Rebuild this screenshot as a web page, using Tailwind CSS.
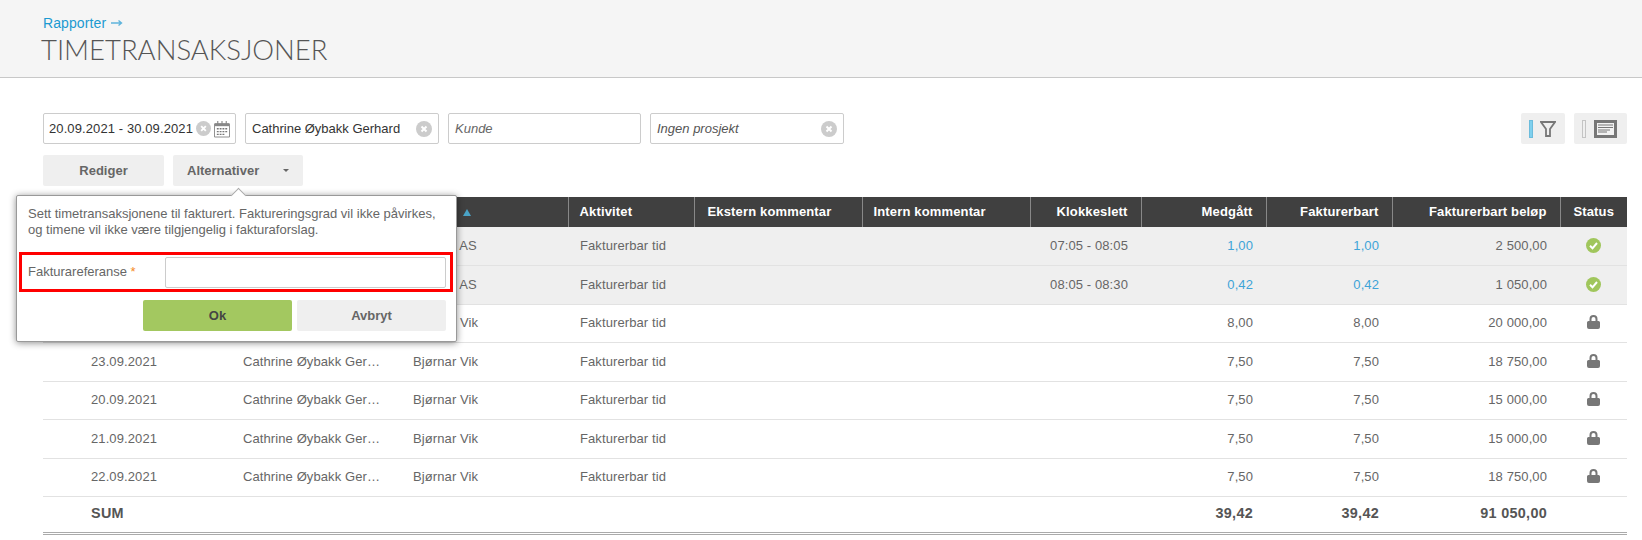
<!DOCTYPE html>
<html lang="nb">
  <head>
    <meta charset="UTF-8" />
    <title>Timetransaksjoner</title>
    <script src="https://cdn.jsdelivr.net/npm/@tailwindcss/browser@4"></script>
  </head>

  <body class="bg-white font-['Liberation_Sans',Arial,sans-serif] text-[#666] text-[13px] overflow-hidden">
    <!-- Page header -->
    <header class="h-[78px] bg-[#f5f5f5] border-b border-[#c8c8c8] px-[43px] pt-[15px]">
      <div class="flex items-center gap-[5px] text-[14px] leading-4 tracking-[0.1px] text-[#1b9ad1]">
        <span>Rapporter</span>
        <svg class="w-3 h-2" viewBox="0 0 12 8"><path d="M0 4h10M7.500 1.500 10.500 4 7.500 6.500" fill="none" stroke="#5fb4dc" stroke-width="1.400"/></svg>
      </div>
      <h1 class="font-['Lato',sans-serif] font-light text-[27.500px] leading-[34px] mt-[2px] text-[#555] -ml-[2px]">TIMETRANSAKSJONER</h1>
    </header>

    <main class="relative pl-[43px] pr-[15px] pt-[35px]">
      <!-- Filters -->
      <div class="flex justify-between">
        <div class="flex gap-[9px]">
          <div class="w-[193px] h-[31px] border border-[#ccc] rounded-[2px] flex items-center pl-[5px] text-[#333]">
            <span class="tracking-[0.1px]">20.09.2021 - 30.09.2021</span>
            <svg class="w-[15px] h-[15px] ml-[3px] shrink-0" viewBox="0 0 16 16"><circle cx="8" cy="8" r="8" fill="#ccc"/><path d="M5.500 5.500l5 5M10.500 5.500l-5 5" stroke="#fff" stroke-width="2"/></svg>
            <svg class="w-[16px] h-[18px] ml-[3px] shrink-0" viewBox="0 0 17 18"><path d="M.5 3.500h16v14H.5z" fill="#fff" stroke="#888"/><path d="M1 3h15v3H1z" fill="#888"/><path d="M4 .5v4M8.500.5v4M13 .5v4" stroke="#888" stroke-width="1.200"/><path d="M3 8h2v1.500H3zM6 8h2v1.500H6zM9 8h2v1.500H9zM12 8h2v1.500h-2zM3 11h2v1.500H3zM6 11h2v1.500H6zM9 11h2v1.500H9zM12 11h2v1.500h-2zM3 14h2v1.500H3zM6 14h2v1.500H6zM9 14h2v1.500H9z" fill="#777"/></svg>
          </div>
          <div class="w-[194px] h-[31px] border border-[#ccc] rounded-[2px] flex items-center justify-between pl-[6px] pr-[6px] text-[#333]">
            <span>Cathrine Øybakk Gerhard</span>
            <svg class="w-4 h-4 shrink-0" viewBox="0 0 16 16"><circle cx="8" cy="8" r="8" fill="#ccc"/><path d="M5.500 5.500l5 5M10.500 5.500l-5 5" stroke="#fff" stroke-width="2"/></svg>
          </div>
          <div class="w-[193px] h-[31px] border border-[#ccc] rounded-[2px] flex items-center pl-[6px] italic text-[#666]">Kunde</div>
          <div class="w-[194px] h-[31px] border border-[#ccc] rounded-[2px] flex items-center justify-between pl-[6px] pr-[6px] italic text-[#555]">
            <span>Ingen prosjekt</span>
            <svg class="w-4 h-4 shrink-0" viewBox="0 0 16 16"><circle cx="8" cy="8" r="8" fill="#ccc"/><path d="M5.500 5.500l5 5M10.500 5.500l-5 5" stroke="#fff" stroke-width="2"/></svg>
          </div>
        </div>
        <div class="flex gap-[9px]">
          <button class="w-[44px] h-[31px] bg-[#efefef] rounded-[2px] flex items-center pl-2 gap-[7px]">
            <span class="w-1 h-[18px] bg-[#7fd0ee] border border-[#6cbcdc]"></span>
            <svg class="w-4 h-4" viewBox="0 0 16 16"><path d="M1 1h14L10 8v7H6V8z" fill="none" stroke="#777" stroke-width="1.800"/></svg>
          </button>
          <button class="w-[53px] h-[31px] bg-[#efefef] rounded-[2px] flex items-center pl-2 gap-[8px]">
            <span class="w-1 h-[18px] bg-[#efefef] border border-[#c4c4c4]"></span>
            <svg class="w-[23px] h-[18px]" viewBox="0 0 23 18"><path d="M0 0h23v18H0z" fill="#777"/><path d="M3 3h17v12H3z" fill="#f2f2f2"/><path d="M4 5h15M4 7.500h15M4 10h12M4 12h9" stroke="#777" stroke-width="1"/></svg>
          </button>
        </div>
      </div>

      <!-- Actions -->
      <div class="flex gap-[9px] mt-[11px] font-bold text-[#666]">
        <button class="w-[121px] h-[31px] bg-[#efefef] rounded-[2px]">Rediger</button>
        <button class="w-[130px] h-[31px] bg-[#efefef] rounded-[2px] flex items-center pl-[14px]">
          <span>Alternativer</span>
          <span class="ml-[24px] border-x-[3.500px] border-t-[3.500px] border-x-transparent border-t-[#666]"></span>
        </button>
      </div>

      <!-- Table -->
      <table class="mt-[11px] w-[1584px] table-fixed border-collapse">
        <colgroup>
          <col class="w-[188px]" /><col class="w-[169px]" /><col class="w-[168px]" /><col class="w-[126px]" /><col class="w-[168px]" /><col class="w-[168px]" /><col class="w-[111px]" /><col class="w-[125px]" /><col class="w-[126px]" /><col class="w-[168px]" /><col class="w-[67px]" />
        </colgroup>
        <thead class="bg-[#404040] text-white font-bold tracking-[0.15px]">
          <tr class="h-[30px] [&_th]:border-l [&_th]:border-[#888] [&_th]:font-bold [&_th:first-child]:border-l-0">
            <th class="pl-[48px] text-left">Dato</th>
            <th class="pl-[12px] text-left">Ansatt</th>
            <th class="pl-[13px] text-left"><div class="flex items-center gap-2"><span>Kunde</span><span class="border-x-[4px] border-b-[7px] border-x-transparent border-b-[#4aa3c6]"></span></div></th>
            <th class="pl-[11px] text-left">Aktivitet</th>
            <th class="pl-[13px] text-left">Ekstern kommentar</th>
            <th class="pl-[11px] text-left">Intern kommentar</th>
            <th class="pr-[13px] text-right">Klokkeslett</th>
            <th class="pr-[13px] text-right">Medgått</th>
            <th class="pr-[13px] text-right">Fakturerbart</th>
            <th class="pr-[13px] text-right">Fakturerbart beløp</th>
            <th class="text-center">Status</th>
          </tr>
        </thead>
        <tbody class="tracking-[0.1px] [&_tr]:border-b [&_tr]:border-[#e2e2e2]">
          <tr class="h-[38px] bg-[#efefef]">
            <td class="pl-[48px]">23.09.2021</td>
            <td class="pl-[12px] pr-[19px]"><div class="truncate">Cathrine Øybakk Gerhard</div></td>
            <td class="pl-[13px]">Bjørnar AS</td>
            <td class="pl-[12px]">Fakturerbar tid</td><td></td><td></td>
            <td class="pr-[13px] text-right">07:05 - 08:05</td>
            <td class="pr-[13px] text-right text-[#3ea4d8]">1,00</td>
            <td class="pr-[13px] text-right text-[#3ea4d8]">1,00</td>
            <td class="pr-[13px] text-right">2 500,00</td>
            <td><svg class="w-[15px] h-[15px] mx-auto" viewBox="0 0 15 15"><circle cx="7.500" cy="7.500" r="7.500" fill="#a0c65c"/><path d="M4 7.800l2.500 2.500L11 5" fill="none" stroke="#fff" stroke-width="2"/></svg></td>
          </tr>
          <tr class="h-[39px] bg-[#efefef]">
            <td class="pl-[48px]">23.09.2021</td>
            <td class="pl-[12px] pr-[19px]"><div class="truncate">Cathrine Øybakk Gerhard</div></td>
            <td class="pl-[13px]">Bjørnar AS</td>
            <td class="pl-[12px]">Fakturerbar tid</td><td></td><td></td>
            <td class="pr-[13px] text-right">08:05 - 08:30</td>
            <td class="pr-[13px] text-right text-[#3ea4d8]">0,42</td>
            <td class="pr-[13px] text-right text-[#3ea4d8]">0,42</td>
            <td class="pr-[13px] text-right">1 050,00</td>
            <td><svg class="w-[15px] h-[15px] mx-auto" viewBox="0 0 15 15"><circle cx="7.500" cy="7.500" r="7.500" fill="#a0c65c"/><path d="M4 7.800l2.500 2.500L11 5" fill="none" stroke="#fff" stroke-width="2"/></svg></td>
          </tr>
          <tr class="h-[38px]">
            <td class="pl-[48px]">22.09.2021</td>
            <td class="pl-[12px] pr-[19px]"><div class="truncate">Cathrine Øybakk Gerhard</div></td>
            <td class="pl-[13px]">Bjørnar Vik</td>
            <td class="pl-[12px]">Fakturerbar tid</td><td></td><td></td><td></td>
            <td class="pr-[13px] text-right">8,00</td>
            <td class="pr-[13px] text-right">8,00</td>
            <td class="pr-[13px] text-right">20 000,00</td>
            <td><svg class="w-[13px] h-[14px] mx-auto -mt-[2px]" viewBox="0 0 13 14"><path d="M3.500 7V4a3 3 0 0 1 6 0V7" fill="none" stroke="#777" stroke-width="2"/><path d="M1.500 6h10A1.500 1.500 0 0 1 13 7.500V12a2 2 0 0 1-2 2H2a2 2 0 0 1-2-2V7.500A1.500 1.500 0 0 1 1.500 6z" fill="#777"/></svg></td>
          </tr>
          <tr class="h-[39px]">
            <td class="pl-[48px]">23.09.2021</td>
            <td class="pl-[12px] pr-[19px]"><div class="truncate">Cathrine Øybakk Gerhard</div></td>
            <td class="pl-[13px]">Bjørnar Vik</td>
            <td class="pl-[12px]">Fakturerbar tid</td><td></td><td></td><td></td>
            <td class="pr-[13px] text-right">7,50</td>
            <td class="pr-[13px] text-right">7,50</td>
            <td class="pr-[13px] text-right">18 750,00</td>
            <td><svg class="w-[13px] h-[14px] mx-auto -mt-[2px]" viewBox="0 0 13 14"><path d="M3.500 7V4a3 3 0 0 1 6 0V7" fill="none" stroke="#777" stroke-width="2"/><path d="M1.500 6h10A1.500 1.500 0 0 1 13 7.500V12a2 2 0 0 1-2 2H2a2 2 0 0 1-2-2V7.500A1.500 1.500 0 0 1 1.500 6z" fill="#777"/></svg></td>
          </tr>
          <tr class="h-[38px]">
            <td class="pl-[48px]">20.09.2021</td>
            <td class="pl-[12px] pr-[19px]"><div class="truncate">Cathrine Øybakk Gerhard</div></td>
            <td class="pl-[13px]">Bjørnar Vik</td>
            <td class="pl-[12px]">Fakturerbar tid</td><td></td><td></td><td></td>
            <td class="pr-[13px] text-right">7,50</td>
            <td class="pr-[13px] text-right">7,50</td>
            <td class="pr-[13px] text-right">15 000,00</td>
            <td><svg class="w-[13px] h-[14px] mx-auto -mt-[2px]" viewBox="0 0 13 14"><path d="M3.500 7V4a3 3 0 0 1 6 0V7" fill="none" stroke="#777" stroke-width="2"/><path d="M1.500 6h10A1.500 1.500 0 0 1 13 7.500V12a2 2 0 0 1-2 2H2a2 2 0 0 1-2-2V7.500A1.500 1.500 0 0 1 1.500 6z" fill="#777"/></svg></td>
          </tr>
          <tr class="h-[39px]">
            <td class="pl-[48px]">21.09.2021</td>
            <td class="pl-[12px] pr-[19px]"><div class="truncate">Cathrine Øybakk Gerhard</div></td>
            <td class="pl-[13px]">Bjørnar Vik</td>
            <td class="pl-[12px]">Fakturerbar tid</td><td></td><td></td><td></td>
            <td class="pr-[13px] text-right">7,50</td>
            <td class="pr-[13px] text-right">7,50</td>
            <td class="pr-[13px] text-right">15 000,00</td>
            <td><svg class="w-[13px] h-[14px] mx-auto -mt-[2px]" viewBox="0 0 13 14"><path d="M3.500 7V4a3 3 0 0 1 6 0V7" fill="none" stroke="#777" stroke-width="2"/><path d="M1.500 6h10A1.500 1.500 0 0 1 13 7.500V12a2 2 0 0 1-2 2H2a2 2 0 0 1-2-2V7.500A1.500 1.500 0 0 1 1.500 6z" fill="#777"/></svg></td>
          </tr>
          <tr class="h-[38px]">
            <td class="pl-[48px]">22.09.2021</td>
            <td class="pl-[12px] pr-[19px]"><div class="truncate">Cathrine Øybakk Gerhard</div></td>
            <td class="pl-[13px]">Bjørnar Vik</td>
            <td class="pl-[12px]">Fakturerbar tid</td><td></td><td></td><td></td>
            <td class="pr-[13px] text-right">7,50</td>
            <td class="pr-[13px] text-right">7,50</td>
            <td class="pr-[13px] text-right">18 750,00</td>
            <td><svg class="w-[13px] h-[14px] mx-auto -mt-[2px]" viewBox="0 0 13 14"><path d="M3.500 7V4a3 3 0 0 1 6 0V7" fill="none" stroke="#777" stroke-width="2"/><path d="M1.500 6h10A1.500 1.500 0 0 1 13 7.500V12a2 2 0 0 1-2 2H2a2 2 0 0 1-2-2V7.500A1.500 1.500 0 0 1 1.500 6z" fill="#777"/></svg></td>
          </tr>
        </tbody>
        <tfoot class="font-bold text-[14.400px] text-[#555] tracking-[0.3px]">
          <tr class="h-[37px] border-b-[3px] border-double border-[#aaa]">
            <td class="pl-[48px]">SUM</td>
            <td></td><td></td><td></td><td></td><td></td><td></td>
            <td class="pr-[13px] text-right">39,42</td>
            <td class="pr-[13px] text-right">39,42</td>
            <td class="pr-[13px] text-right">91 050,00</td>
            <td></td>
          </tr>
        </tfoot>
      </table>

      <!-- Popover from Alternativer -->
      <div class="absolute left-[16px] top-[117px] w-[441px] h-[147px] bg-white border border-[#999] rounded-[2px] shadow-[0_1px_7px_rgba(0,0,0,0.45)] pt-[10px]">
        <div class="absolute -top-[6px] left-[216px] w-[11px] h-[11px] rotate-45 bg-white border-l border-t border-[#aaa]"></div>
        <p class="relative pl-[11px] leading-4 text-[#666]">
          Sett timetransaksjonene til fakturert. Faktureringsgrad vil ikke påvirkes,<br />og timene vil ikke være tilgjengelig i fakturaforslag.
        </p>
        <div class="ml-[2px] w-[434px] h-[40px] mt-[14px] border-[3px] border-[#f00] flex items-center pl-[6px] pr-[4px]">
          <label class="w-[137px]">Fakturareferanse <span class="text-[#f58a1f]">*</span></label>
          <input class="flex-1 h-[31px] border border-[#ccc] rounded-[2px] bg-white" />
        </div>
        <div class="flex justify-end gap-[5px] mt-[8px] pr-[10px] font-bold">
          <button class="w-[149px] h-[31px] bg-[#a3c860] text-[#444] rounded-[2px]">Ok</button>
          <button class="w-[149px] h-[31px] bg-[#efefef] text-[#666] rounded-[2px]">Avbryt</button>
        </div>
      </div>
    </main>
  </body>
</html>
